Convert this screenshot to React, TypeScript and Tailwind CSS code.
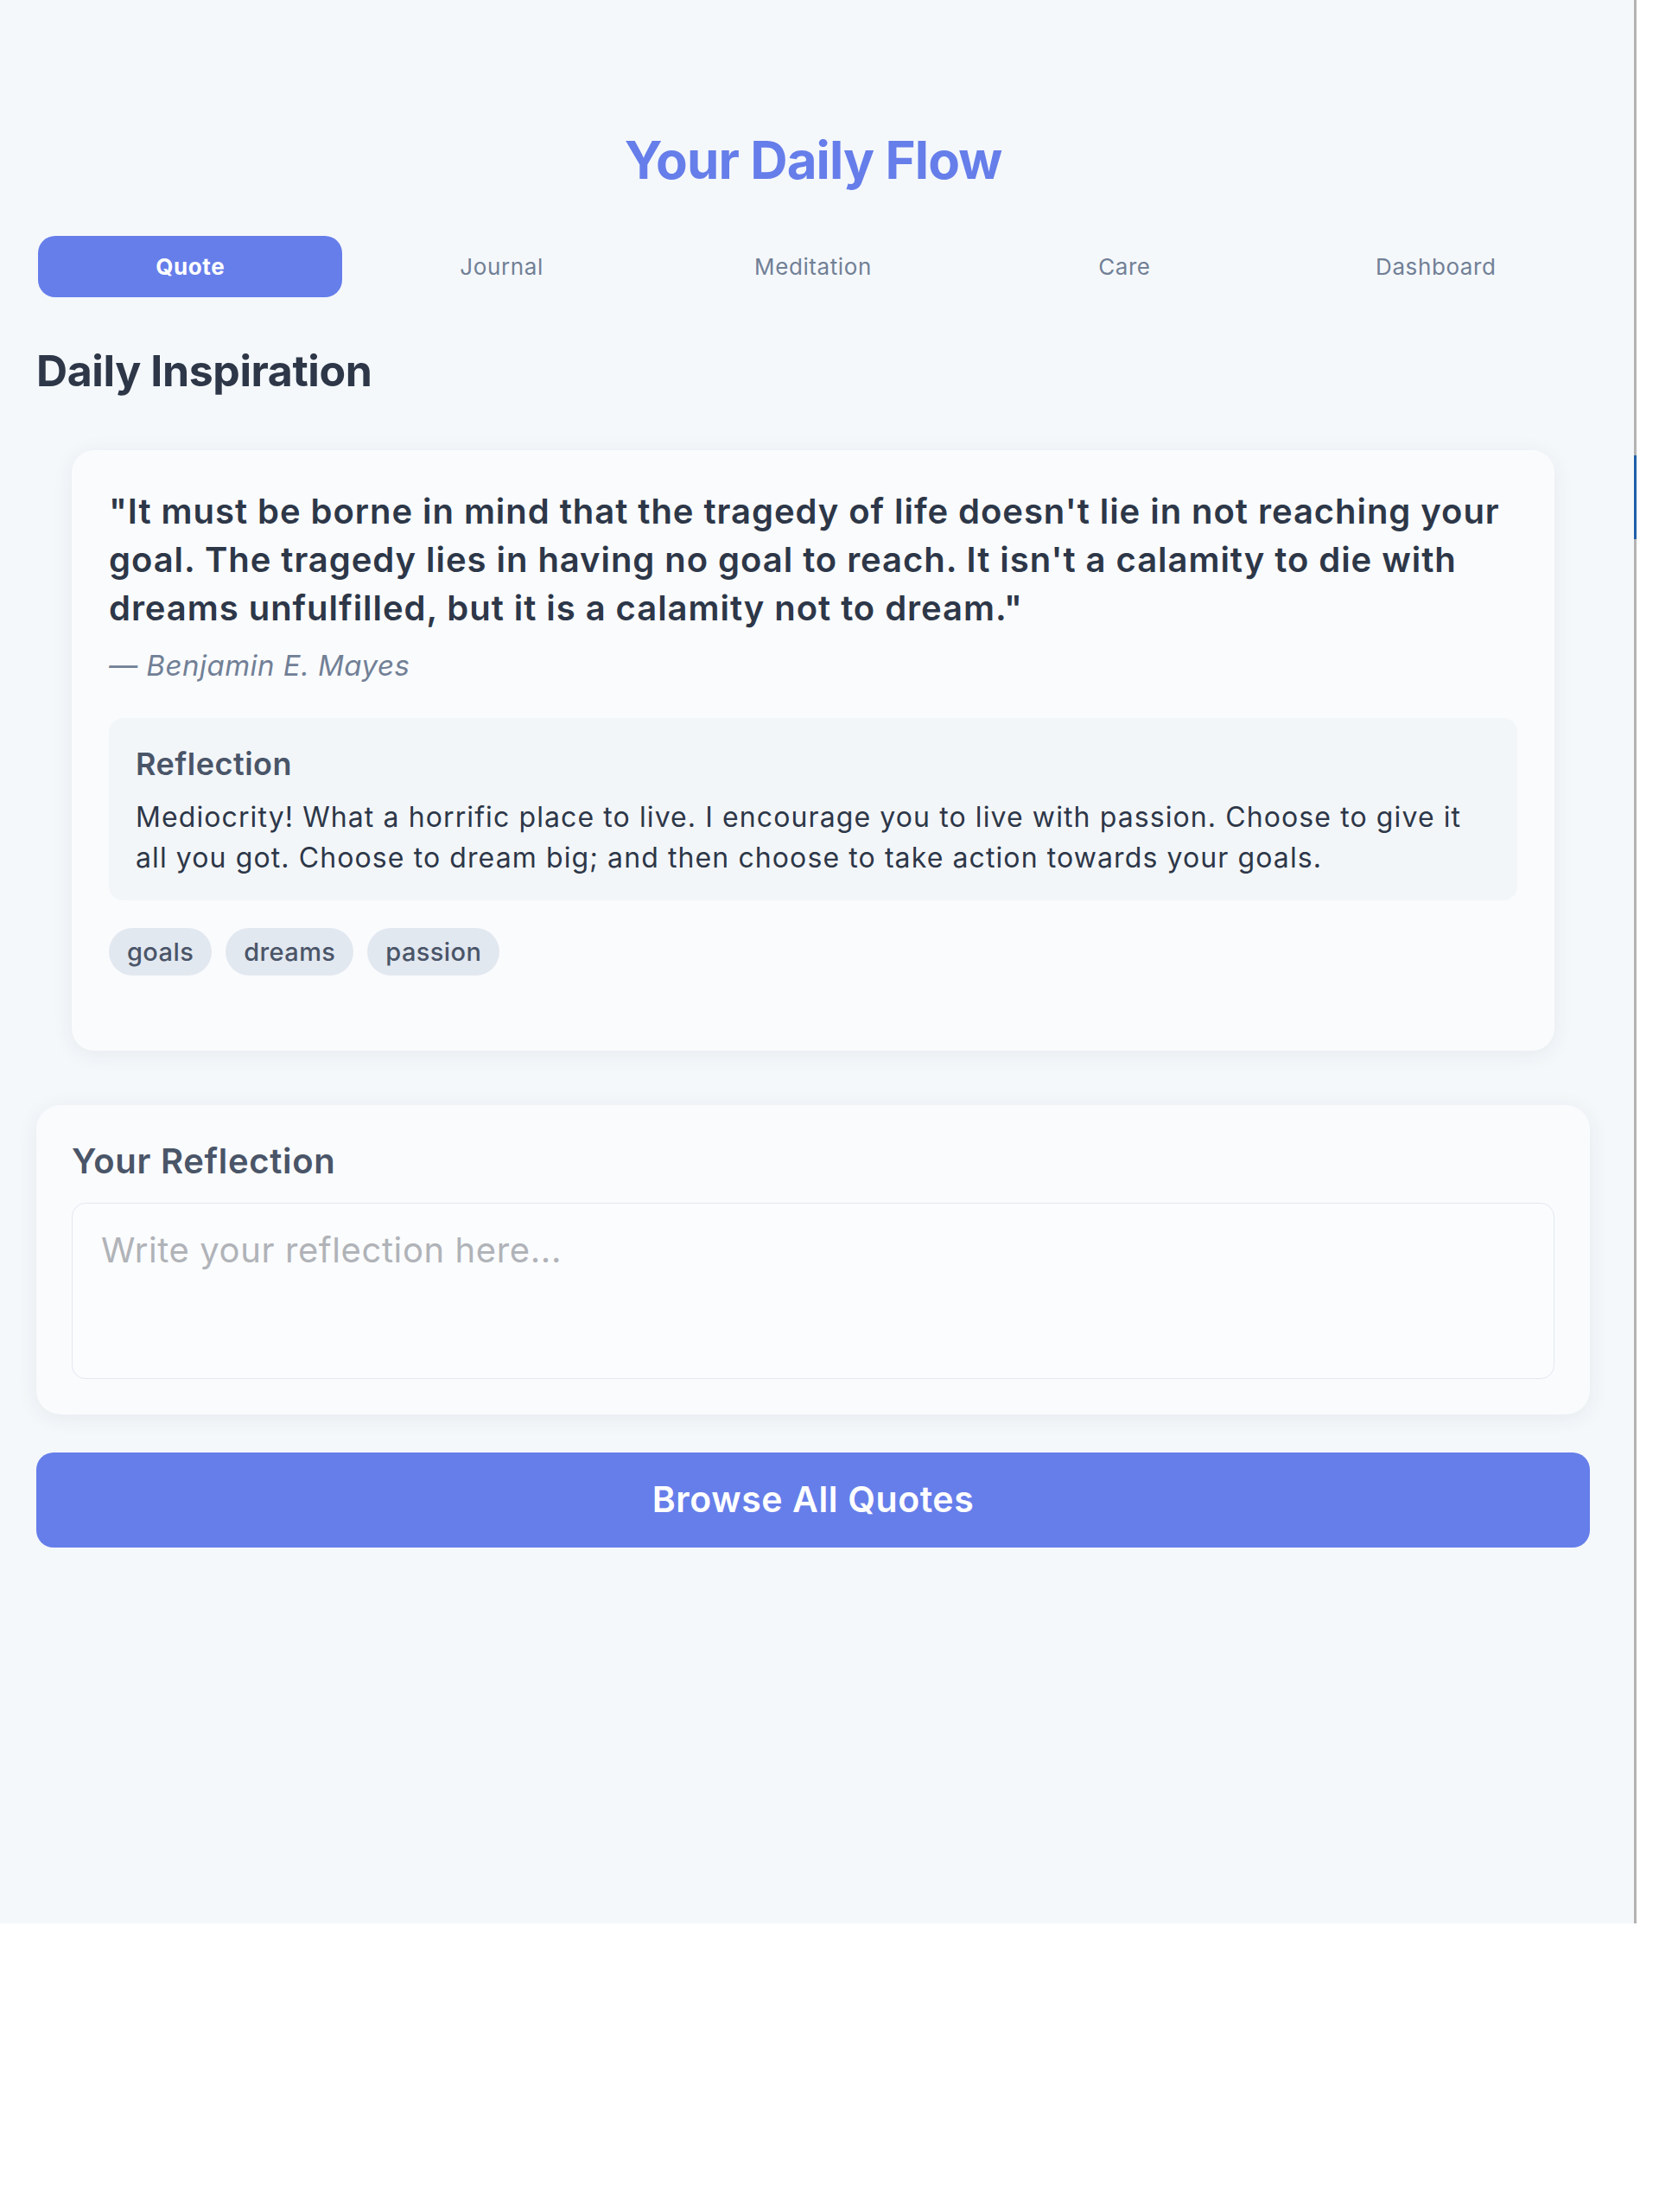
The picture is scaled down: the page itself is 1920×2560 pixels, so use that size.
import React from "react";

const tabs = ["Quote", "Journal", "Meditation", "Care", "Dashboard"];
const tags = ["goals", "dreams", "passion"];

export default function App() {
  return (
    <div
      className="flex min-h-[2560px] w-[1920px] bg-white"
      style={{ fontFamily: "Inter, 'Noto Sans', sans-serif" }}
    >
      <div className="h-[2226px] w-[1891px] shrink-0 bg-[#f5f8fb]">
        <div className="ml-[42px] w-[1798px] pt-[154px]">
          <h1 className="text-center text-[60px] font-bold leading-[62px] tracking-[-0.9px] text-[#667eea]">
            Your Daily Flow
          </h1>

          <nav className="mt-[57px] grid grid-cols-5 gap-[8px] px-[2px]">
            {tabs.map((t, i) => (
              <button
                key={t}
                className={
                  i === 0
                    ? "h-[71px] rounded-[20px] bg-[#667eea] text-[26px] font-bold tracking-[0.6px] text-white"
                    : "h-[71px] rounded-[20px] text-[26px] font-normal tracking-[0.6px] text-[#718096]"
                }
              >
                {t}
              </button>
            ))}
          </nav>

          <h2 className="mt-[55px] text-[50px] font-bold leading-[60px] tracking-[-0.4px] text-[#2d3748]">
            Daily Inspiration
          </h2>

          <div className="mx-[41px] mt-[62px] rounded-[26px] bg-[#fafbfd] p-[43px] pb-[87px] shadow-[0_4px_24px_rgba(30,41,59,0.07)]">
            <p className="text-[40px] font-semibold leading-[56px] tracking-[0.95px] text-[#2d3748]">
              "It must be borne in mind that the tragedy of life doesn't lie in not reaching your
              goal. The tragedy lies in having no goal to reach. It isn't a calamity to die with
              dreams unfulfilled, but it is a calamity not to dream."
            </p>
            <p className="mt-[14px] text-[33px] italic leading-[48px] tracking-[0.5px] text-[#718096]">
              — Benjamin E. Mayes
            </p>

            <div className="mt-[37px] rounded-[16px] bg-[#f3f6f9] px-[31px] pb-[26px] pt-[33px]">
              <h3 className="text-[36px] font-semibold leading-[40px] tracking-[0.5px] text-[#4a5568]">
                Reflection
              </h3>
              <p className="mt-[18px] text-[32px] leading-[47px] tracking-[1.1px] text-[#2d3748]">
                Mediocrity! What a horrific place to live. I encourage you to live with passion.
                Choose to give it all you got. Choose to dream big; and then choose to take action
                towards your goals.
              </p>
            </div>

            <div className="mt-[32px] flex gap-[16px]">
              {tags.map((t) => (
                <span
                  key={t}
                  className="flex h-[55px] items-center rounded-full bg-[#e2e8f0] px-[21px] text-[29px] font-medium tracking-[0.4px] text-[#4a5568]"
                >
                  {t}
                </span>
              ))}
            </div>
          </div>

          <div className="mt-[63px] rounded-[28px] bg-[#fafbfd] px-[41px] pb-[41px] pt-[41px] shadow-[0_4px_24px_rgba(30,41,59,0.07)]">
            <h3 className="text-[40px] font-semibold leading-[48px] tracking-[0.7px] text-[#4a5568]">
              Your Reflection
            </h3>
            <textarea
              className="mt-[24px] block h-[204px] w-full resize-none rounded-[16px] border-[1.5px] border-[#e2e8f0] bg-[#fbfcfe] px-[33px] pt-[24px] text-[40px] leading-[60px] tracking-[0.6px] text-[#2d3748] outline-none placeholder:text-[#b0b3b8]"
              placeholder="Write your reflection here..."
            />
          </div>

          <button className="mt-[44px] flex h-[110px] w-full items-center justify-center rounded-[20px] bg-[#667eea] text-[41px] font-semibold tracking-[0.6px] text-white">
            Browse All Quotes
          </button>
        </div>
      </div>

      <div className="flex h-[2226px] w-[3px] shrink-0 flex-col bg-[#b3b3b3]">
        <div className="h-[527px]" />
        <div className="h-[97px] bg-[#1d5fa8]" />
      </div>
    </div>
  );
}
